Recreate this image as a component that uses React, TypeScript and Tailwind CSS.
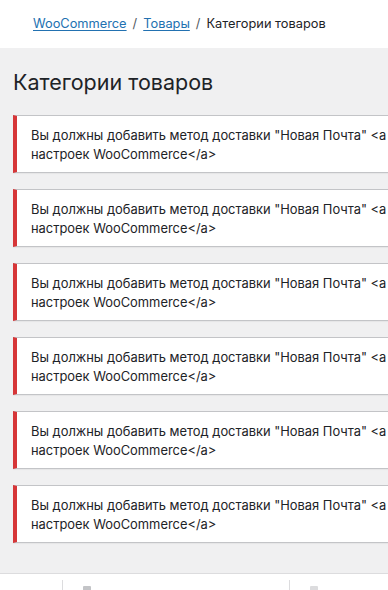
const notices = [1, 2, 3, 4, 5, 6];

export default function App() {
  return (
    <div
      className="w-[388px] h-[590px] overflow-hidden bg-[#f0f0f1] text-[#1d2327]"
      style={{ fontFamily: 'Inter, "Noto Sans", sans-serif' }}
    >
      <div className="h-[48px] bg-white flex items-center pl-[33px] text-[12.8px] whitespace-nowrap">
        <a href="#" className="text-[#2271b1] underline underline-offset-2">WooCommerce</a>
        <span className="mx-[6px] text-[#50575e]">/</span>
        <a href="#" className="text-[#2271b1] underline underline-offset-2">Товары</a>
        <span className="mx-[6px] text-[#50575e]">/</span>
        <span>Категории товаров</span>
      </div>

      <div className="pl-[13px]">
        <h1 className="pt-[20px] pb-[18px] text-[21.5px] leading-[29px] font-normal">Категории товаров</h1>

        <div className="flex flex-col gap-[16px] w-[640px]">
          {notices.map((n) => (
            <div
              key={n}
              className="h-[58px] bg-white border border-[#c3c4c7] border-l-4 border-l-[#d63638] shadow-[0_1px_1px_rgba(0,0,0,0.04)] pl-[14px] pt-[10px] text-[12.9px] leading-[19px] whitespace-nowrap"
            >
              <p>Вы должны добавить метод доставки "Новая Почта" &lt;a href="admin.php?page=wc-settings"&gt;на странице</p>
              <p>настроек WooCommerce&lt;/a&gt;</p>
            </div>
          ))}
        </div>
      </div>

      <div className="mt-[30px] h-[40px] bg-white border-t border-[#dcdcde] flex">
        <div className="w-[63px] border-r border-[#dcdcde] mt-[6px]" />
        <div className="w-[227px] border-r border-[#dcdcde] mt-[6px] pl-[20px] pt-[6px]">
          <div className="w-[8px] h-[8px] bg-[#c3c4c7] rounded-[1px]" />
        </div>
        <div className="flex-1 mt-[6px] pl-[20px] pt-[6px]">
          <div className="w-[8px] h-[8px] bg-[#dcdcde] rounded-[1px]" />
        </div>
      </div>
    </div>
  );
}
